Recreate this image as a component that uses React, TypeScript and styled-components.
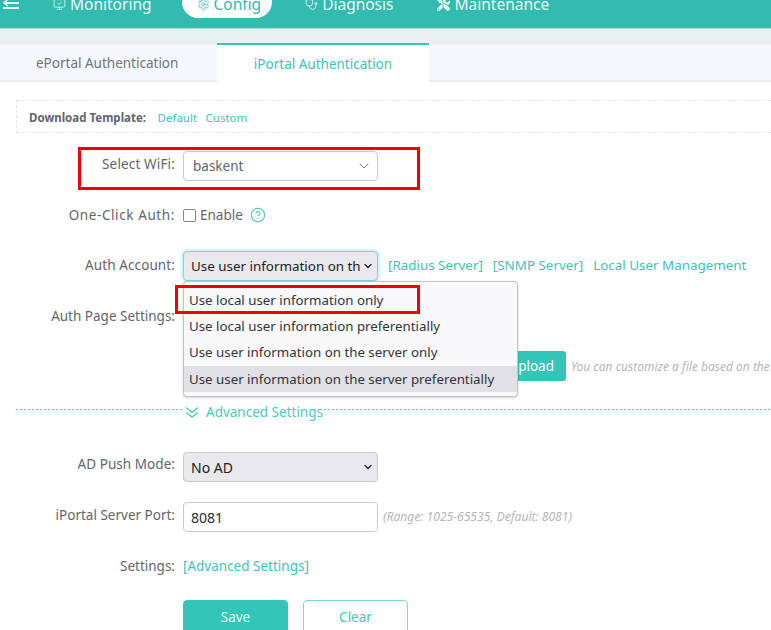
import React from 'react';
import styled, { createGlobalStyle } from 'styled-components';
import { MonitorCheck, Settings, Stethoscope, ChevronDown, CircleHelp } from 'lucide-react';
import { FaTools } from 'react-icons/fa';

const Global = createGlobalStyle`
  html, body { margin: 0; padding: 0; background: #fff; }
  body { font-family: "Noto Sans", "Open Sans", "Liberation Sans", sans-serif; color: #5f6068; }
  #root { width: 771px; height: 630px; overflow: hidden; }
`;
const Page = styled.div`width: 771px; height: 630px; overflow: hidden; position: relative; background: #fff;`;
const Header = styled.header`
  height: 29px; box-sizing: border-box; background: #33bbb0; border-bottom: 1px solid #a5dfd8; display: flex; align-items: flex-end;
  padding: 0 0 10px 2px;
`;
const MenuIcon = styled.svg`width: 17px; height: 15px; flex: none; margin: 0 34px 8px 0;`;
const NavItem = styled.div<{ $active?: boolean; $gap: number }>`
  flex: none; height: 32px; display: flex; align-items: center; gap: 4px; font-size: 15.5px; line-height: 20px;
  padding: 4px ${p => (p.$active ? '11px' : '0')} 0 ${p => (p.$active ? '15px' : '0')}; box-sizing: border-box;
  margin-right: ${p => p.$gap}px;
  color: ${p => (p.$active ? '#33bbb0' : '#e9f8f6')};
  background: ${p => (p.$active ? '#fff' : 'transparent')};
  border-radius: 16px;
  svg { width: 13px; height: 13px; flex: none; }
`;
const Strip = styled.div`height: 14px; background: #e8f1ef;`;
const Tabs = styled.div`height: 39px; box-sizing: border-box; background: #f5f7fa; border-top: 1px solid #e6eaed; border-bottom: 2px solid #e9edf0; display: flex;`;
const Tab = styled.div<{ $active?: boolean }>`
  box-sizing: border-box; flex: none; margin-top: -1px;
  width: ${p => (p.$active ? '212px' : '189px')};
  height: 40px;
  margin-left: ${p => (p.$active ? '28px' : '0')};
  padding-left: ${p => (p.$active ? '0' : '36px')};
  display: flex; align-items: center; justify-content: ${p => (p.$active ? 'center' : 'flex-start')};
  font-size: 13.5px; color: ${p => (p.$active ? '#3cc4b8' : '#72747c')};
  background: ${p => (p.$active ? '#fff' : 'transparent')};
  border-top: ${p => (p.$active ? '2px solid #33c5b8' : 'none')};
`;
const TemplateBar = styled.div`
  margin: 18px 0 0 16px; height: 33px; box-sizing: border-box; border: 1px dashed #e2e4e6; border-right: none; display: flex; align-items: center;
  padding: 1px 0 0 12px; font-size: 11.5px; gap: 8.5px;
`;
const TemplateLabel = styled.b`color: #63656c; margin-right: 3px; font-weight: 700;`;
const Link = styled.span`color: #3fc2b6;`;
const SettingsLink = styled(Link)`font-size: 13.5px; line-height: 26px;`;
const Form = styled.div`padding-top: 18px; display: flex; flex-direction: column;`;
const Row = styled.div<{ $h: number; $mt?: number; $center?: boolean }>`
  display: flex; height: ${p => p.$h}px; margin-top: ${p => p.$mt ?? 0}px; align-items: ${p => (p.$center ? 'center' : 'flex-start')};
`;
const Label = styled.div<{ $top?: number; $track?: number }>`
  width: 175px; flex: none; text-align: right; font-size: 13.5px; line-height: 26px; color: #63656c; margin-right: 8px; white-space: nowrap;
  letter-spacing: ${p => p.$track ?? 0}px;
  transform: translateY(${p => p.$top ?? 0}px);
`;
const SelectBox = styled.div<{ $variant?: 'plain' | 'native' | 'focus' }>`
  width: 195px; height: 30px; box-sizing: border-box; flex: none; display: flex; align-items: center; justify-content: space-between;
  border-radius: 4px; font-size: ${p => (p.$variant === 'plain' ? '13.5px' : '14px')}; white-space: nowrap; overflow: hidden;
  border: 1px solid ${p => (p.$variant === 'focus' ? '#7ad8cf' : '#c8c9cc')};
  background: ${p => (p.$variant === 'plain' ? '#fff' : '#e9e9ed')};
  color: ${p => (p.$variant === 'plain' ? '#63656c' : '#1f2024')};
  padding: ${p => (p.$variant === 'plain' ? '0 5px 0 9px' : '0 3px 0 7px')};
  box-shadow: ${p => (p.$variant === 'focus' ? '0 0 4px #7fe0d6' : 'none')};
  svg { flex: none; }
`;
const FocusWrap = styled.div`flex: none; padding: 4px; margin: -4px; overflow: visible;`;
const ClipText = styled.span`overflow: hidden; flex: none; width: 170px; font-size: 13.4px; white-space: nowrap;`;
const Check = styled.span`width: 11px; height: 11px; border: 1px solid #85858f; border-radius: 2px; margin: 1px 4px 0 0; flex: none;`;
const Enable = styled.div`display: flex; align-items: center; font-size: 13.5px; color: #63656c; height: 28px;`;
const Help = styled(CircleHelp)`color: #5ccdc3; margin-left: 7px; width: 16px; height: 16px;`;
const Links = styled.div`display: flex; gap: 10px; margin-left: 10px; font-size: 13.4px; line-height: 29px;`;
const UploadLine = styled.div`display: flex; align-items: center; height: 30px; margin-left: 516px;`;
const Upload = styled.div`
  width: 50px; height: 30px; box-sizing: border-box; background: #33c5b8; color: #fff; border-radius: 0 3px 3px 0; font-size: 13.5px;
  display: flex; align-items: center; justify-content: flex-end; padding-right: 12px; flex: none;
`;
const Hint = styled.i`font-size: 12px; color: #b5b6ba; margin-left: 5px; white-space: nowrap;`;
const Divider = styled.div`
  margin: 28px 0 0 16px; height: 1px; position: relative;
  background: repeating-linear-gradient(90deg, #4fcabd 0 2px, transparent 2px 4px);
`;
const AdvToggle = styled.div`
  position: absolute; left: 167px; top: -6px; height: 18px; background: #fff; display: flex; align-items: center; gap: 7px;
  font-size: 13.5px; color: #4dc8bc; padding-left: 2px;
`;
const DoubleChevron = styled.svg`width: 14px; height: 14px; flex: none;`;
const Input = styled.div`
  width: 195px; height: 30px; box-sizing: border-box; border: 1px solid #c8c9cc; border-radius: 4px; background: #fff;
  padding: 0 7px; font-size: 14px; color: #2a2b30; display: flex; align-items: center; flex: none;
`;
const Range = styled.i`font-size: 12.1px; color: #b5b6ba; margin-left: 5px; line-height: 30px; white-space: nowrap;`;
const Actions = styled.div`display: flex; gap: 15px; margin: 21px 0 0 183px;`;
const Btn = styled.div<{ $primary?: boolean }>`
  width: 105px; height: 34px; box-sizing: border-box; display: flex; align-items: center; justify-content: center;
  border-radius: 4px; font-size: 13.5px; flex: none;
  background: ${p => (p.$primary ? '#33c5b8' : '#fff')};
  color: ${p => (p.$primary ? '#eafaf8' : '#45c6ba')};
  border: 1px solid ${p => (p.$primary ? '#33c5b8' : '#7ad8cf')};
`;
const Dropdown = styled.div`
  position: absolute; left: 183px; top: 281px; width: 335px; height: 116px; box-sizing: border-box; background: #f9f9fb;
  border: 1px solid #c4c4c6; border-radius: 4px; box-shadow: 0 1px 3px rgba(0,0,0,.18); padding: 5px 0 2px; z-index: 2;
`;
const Option = styled.div<{ $selected?: boolean }>`
  height: 26.2px; line-height: 26px; padding-left: 5px; font-size: 13.3px; color: #33343a; white-space: nowrap;
  background: ${p => (p.$selected ? '#e0e0e6' : 'transparent')};
`;
const RedBox = styled.div<{ $l: number; $t: number; $w: number; $h: number }>`
  position: absolute; left: ${p => p.$l}px; top: ${p => p.$t}px; width: ${p => p.$w}px; height: ${p => p.$h}px;
  border: 3px solid #f00000; box-sizing: border-box; z-index: 3; pointer-events: none;
`;

export default function App() {
  return (
    <Page>
      <Global />
      <Header>
        <MenuIcon viewBox="0 0 17 15" fill="none" stroke="#eafaf8" strokeWidth="2">
          <path d="M3 8h14M1 13h16" />
          <path d="M6 4 2 8 6 11" strokeWidth="1.5" />
        </MenuIcon>
        <NavItem $gap={30}><MonitorCheck strokeWidth={1.5} />Monitoring</NavItem>
        <NavItem $active $gap={33}><Settings strokeWidth={1.5} />Config</NavItem>
        <NavItem $gap={44}><Stethoscope strokeWidth={1.5} />Diagnosis</NavItem>
        <NavItem $gap={0}><FaTools />Maintenance</NavItem>
      </Header>
      <Strip />
      <Tabs>
        <Tab>ePortal Authentication</Tab>
        <Tab $active>iPortal Authentication</Tab>
      </Tabs>
      <TemplateBar>
        <TemplateLabel>Download Template:</TemplateLabel>
        <Link>Default</Link>
        <Link>Custom</Link>
      </TemplateBar>
      <Form>
        <Row $h={30}>
          <Label $track={0.15}>Select WiFi:</Label>
          <SelectBox $variant="plain">baskent<ChevronDown size={16} strokeWidth={1.4} color="#73747a" /></SelectBox>
        </Row>
        <Row $h={28} $mt={20} $center>
          <Label $track={0.6}>One-Click Auth:</Label>
          <Enable><Check />Enable<Help strokeWidth={1.8} /></Enable>
        </Row>
        <Row $h={30} $mt={22}>
          <Label $top={1} $track={0.1}>Auth Account:</Label>
          <FocusWrap>
            <SelectBox $variant="focus"><ClipText>Use user information on th</ClipText><ChevronDown size={12} strokeWidth={2.6} color="#1f2024" /></SelectBox>
          </FocusWrap>
          <Links><Link>[Radius Server]</Link><Link>[SNMP Server]</Link><Link>Local User Management</Link></Links>
        </Row>
        <Row $h={30} $mt={20}>
          <Label $top={2}>Auth Page Settings:</Label>
        </Row>
        <Row $h={30} $mt={20}>
          <UploadLine>
            <Upload>pload</Upload>
            <Hint>You can customize a file based on the template</Hint>
          </UploadLine>
        </Row>
        <Divider>
          <AdvToggle>
            <DoubleChevron viewBox="0 0 14 14" fill="none" stroke="#4dc8bc" strokeWidth="1.4">
              <path d="M1 2.5 7 7l6-4.5M1 7.5 7 12l6-4.5" />
            </DoubleChevron>
            Advanced Settings
          </AdvToggle>
        </Divider>
        <Row $h={30} $mt={42}>
          <Label $top={-1} $track={0.05}>AD Push Mode:</Label>
          <SelectBox $variant="native"><span>No AD</span><ChevronDown size={12} strokeWidth={2.6} color="#1f2024" /></SelectBox>
        </Row>
        <Row $h={30} $mt={20}>
          <Label>iPortal Server Port:</Label>
          <Input>8081</Input>
          <Range>(Range: 1025-65535, Default: 8081)</Range>
        </Row>
        <Row $h={26} $mt={21}>
          <Label>Settings:</Label>
          <SettingsLink>[Advanced Settings]</SettingsLink>
        </Row>
        <Actions>
          <Btn $primary>Save</Btn>
          <Btn>Clear</Btn>
        </Actions>
      </Form>
      <Dropdown>
        <Option>Use local user information only</Option>
        <Option>Use local user information preferentially</Option>
        <Option>Use user information on the server only</Option>
        <Option $selected>Use user information on the server preferentially</Option>
      </Dropdown>
      <RedBox $l={78} $t={147} $w={342} $h={43} />
      <RedBox $l={175} $t={285} $w={245} $h={29} />
    </Page>
  );
}
